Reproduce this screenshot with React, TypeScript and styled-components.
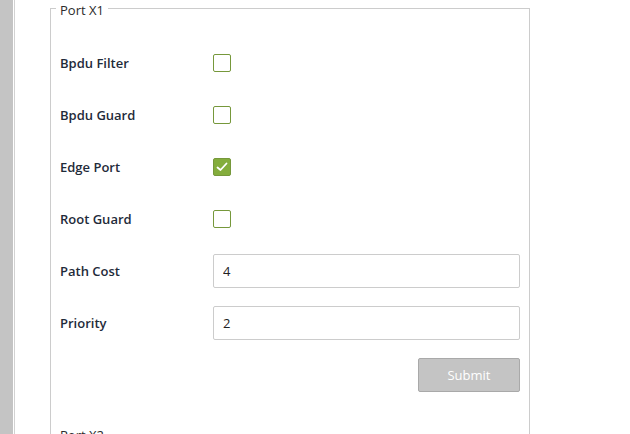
import React from "react";
import styled, { createGlobalStyle } from "styled-components";

const Global = createGlobalStyle`
  html, body { margin: 0; padding: 0; background: #fff; overflow: hidden; }
  body { font-family: "Open Sans", "Liberation Sans", sans-serif; }
  * { box-sizing: border-box; }
`;

const Page = styled.div`
  display: flex;
  height: 434px;
  overflow: hidden;
`;

const Sidebar = styled.div`
  width: 13px;
  background: #c4c4c4;
  flex: none;
`;

const Divider = styled.div`
  width: 1px;
  margin-left: 1px;
  background: #d2d2d2;
  flex: none;
`;

const Content = styled.div`
  padding-left: 35px;
`;

const Panel = styled.fieldset`
  width: 480px;
  margin: -2px 0 0 0;
  padding: 28px 8px 0 9px;
  border: 1px solid #cccccc;
  border-bottom: none;
  min-height: 460px;
`;

const Legend = styled.legend`
  padding: 4px 4px 0 4px;
  margin-left: -4px;
  font-size: 13px;
  color: #2b2b2b;
  line-height: 16px;
`;

const Form = styled.div`
  display: flex;
  flex-direction: column;
  gap: 18px;
`;

const Row = styled.div`
  display: grid;
  grid-template-columns: 153px 1fr;
  align-items: center;
  height: 34px;
`;

const Label = styled.label`
  font-size: 13px;
  font-weight: 600;
  color: #1f2b3a;
`;

const Box = styled.span<{ $checked?: boolean }>`
  width: 18px;
  height: 18px;
  border: 1.5px solid #76983b;
  border-radius: 2px;
  background: ${(p) => (p.$checked ? "#84ad3c" : "#fff")};
  display: flex;
  align-items: center;
  justify-content: center;
`;

const Input = styled.input`
  width: 307px;
  height: 34px;
  border: 1px solid #cccccc;
  border-radius: 2px;
  padding: 0 9px;
  font-family: "Open Sans", "Liberation Sans", sans-serif;
  font-size: 13px;
  color: #222;
  outline: none;
`;

const Actions = styled.div`
  display: flex;
  justify-content: flex-end;
  padding-right: 1px;
`;

const Button = styled.button`
  width: 102px;
  height: 34px;
  background: #c4c4c4;
  border: 1px solid #a9a9a9;
  border-radius: 2px;
  color: #fff;
  font-family: "Open Sans", "Liberation Sans", sans-serif;
  font-size: 13px;
`;

const SubHeading = styled.div`
  margin-top: 35px;
  font-size: 13px;
  color: #2b2b2b;
  line-height: 16px;
`;

const Check = () => (
  <svg width="12" height="10" viewBox="0 0 12 10">
    <path d="M1.5 5.5 L4.5 8 L10.5 1.5" fill="none" stroke="#fff" strokeWidth="1.8" strokeLinecap="round" strokeLinejoin="round" />
  </svg>
);

const checks: [string, boolean][] = [
  ["Bpdu Filter", false],
  ["Bpdu Guard", false],
  ["Edge Port", true],
  ["Root Guard", false],
];

export default function App() {
  return (
    <>
      <Global />
      <Page>
        <Sidebar />
        <Divider />
        <Content>
          <Panel>
            <Legend>Port X1</Legend>
            <Form>
              {checks.map(([name, on]) => (
                <Row key={name}>
                  <Label>{name}</Label>
                  <Box $checked={on}>{on && <Check />}</Box>
                </Row>
              ))}
              <Row>
                <Label>Path Cost</Label>
                <Input defaultValue="4" />
              </Row>
              <Row>
                <Label>Priority</Label>
                <Input defaultValue="2" />
              </Row>
              <Actions>
                <Button>Submit</Button>
              </Actions>
            </Form>
            <SubHeading>Port X2</SubHeading>
          </Panel>
        </Content>
      </Page>
    </>
  );
}
